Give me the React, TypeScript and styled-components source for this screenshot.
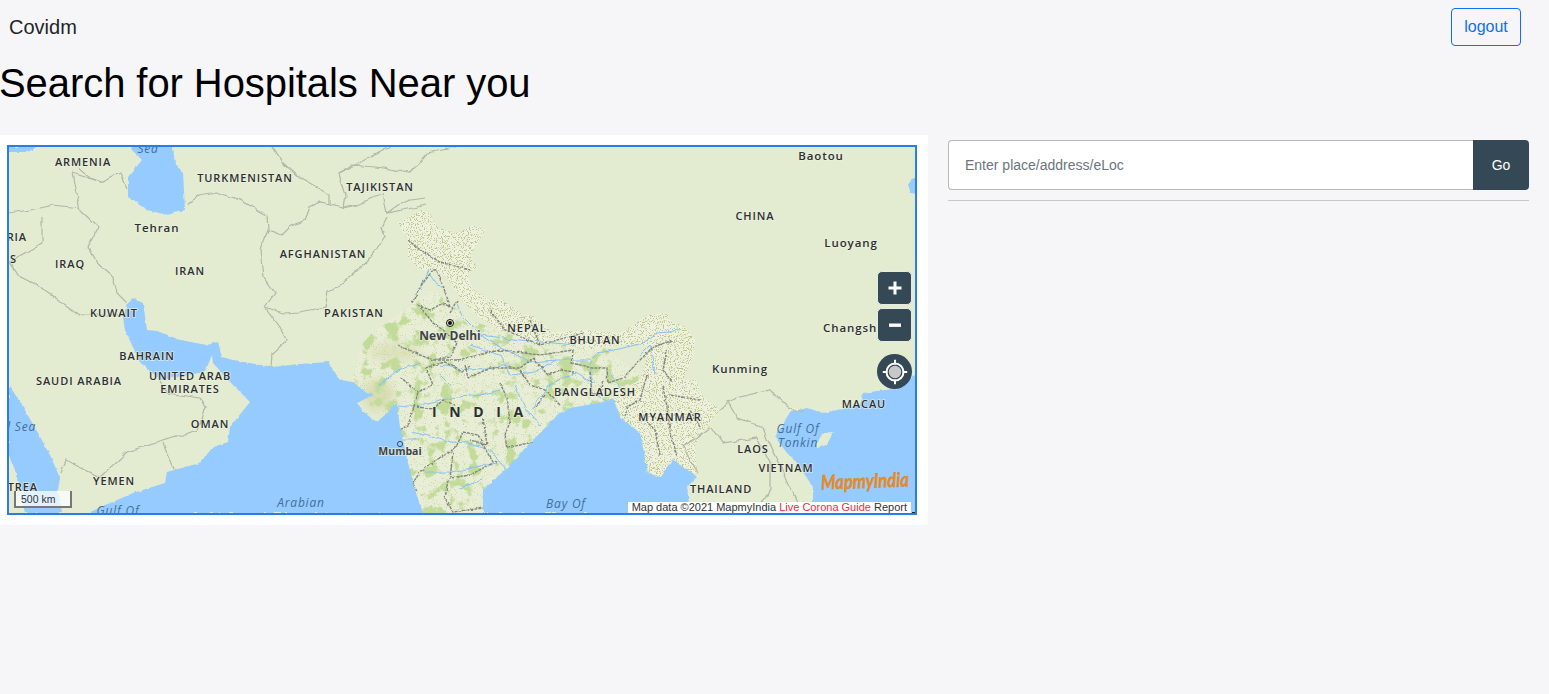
import React from 'react';
import styled, { createGlobalStyle } from 'styled-components';

const Global = createGlobalStyle`
  html, body { margin: 0; padding: 0; background: #f6f6f9; }
  body { font-family: "Liberation Sans", Arial, sans-serif; overflow: hidden; }
  * { box-sizing: border-box; }
`;
const Page = styled.div`width: 1549px; height: 694px; background: #f6f6f9; overflow: hidden;`;
const Navbar = styled.nav`
  height: 54px; padding: 8px 28px 8px 9px; display: flex; align-items: center; justify-content: space-between;
`;
const Brand = styled.a`font-size: 20px; color: #212529; line-height: 30px;`;
const LogoutButton = styled.button`
  height: 38px; width: 70px; padding: 0; font: 16px "Liberation Sans", Arial, sans-serif; color: #0d6efd;
  background: transparent; border: 1px solid #0d6efd; border-radius: 4px;
`;
const Title = styled.h1`
  margin: 5px 0 28px -1px; font-size: 40px; line-height: 48px; font-weight: 400; color: #000; letter-spacing: -0.07px;
`;
const Content = styled.main`display: flex; align-items: flex-start;`;
const MapCard = styled.section`width: 928px; height: 390px; padding: 10px 11px 10px 7px; background: #fff;`;
const MapFrame = styled.div`
  position: relative; width: 910px; height: 370px; border: 2px solid #2a7de8; overflow: hidden; background: #e3ebd0;
`;
const MapSvg = styled.svg`display: block; width: 906px; height: 366px;`;
const Controls = styled.div`
  position: absolute; top: 124px; right: 3px; display: flex; flex-direction: column; align-items: center; gap: 3px;
`;
const ZoomButton = styled.button`
  width: 35px; height: 34px; padding: 0; display: flex; align-items: center; justify-content: center;
  background: #344955; border: 1px solid #e6e9e4; border-radius: 5px;
`;
const LocateButton = styled.button`
  width: 35px; height: 35px; margin-top: 9px; padding: 0; display: flex; align-items: center; justify-content: center;
  background: #344955; border: 0; border-radius: 50%;
`;
const Attribution = styled.div`
  position: absolute; right: 4px; bottom: 0; height: 11px; padding: 0 4px; background: #fff;
  font-size: 11px; line-height: 11px; color: #333; white-space: nowrap;
`;
const CoronaLink = styled.span`color: #ee2b3e;`;
const CornerMark = styled.i`position: absolute; right: 0; bottom: 0; width: 3px; height: 1px; background: #222;`;
const ScaleBar = styled.div`
  position: absolute; left: 5px; bottom: 5px; width: 58px; height: 17px; padding-left: 5px;
  background: rgba(255,255,255,.72); border: 2px solid #777; border-top: 0;
  font-size: 10.5px; line-height: 16px; color: #333;
`;
const SearchColumn = styled.aside`width: 581px; margin-left: 20px; padding-top: 5px;`;
const SearchGroup = styled.form`display: flex; height: 50px; margin: 0;`;
const SearchInput = styled.input`
  flex: 1; min-width: 0; padding: 0 16px; font: 14px "Liberation Sans", Arial, sans-serif; color: #333;
  background: #fff; border: 1px solid #b8b8b8; border-right: 0; border-radius: 4px 0 0 4px; outline: 0;
  &::placeholder { color: #6c757d; opacity: 1; }
`;
const GoButton = styled.button`
  width: 56px; font: 14px "Liberation Sans", Arial, sans-serif; color: #fff; background: #344955;
  border: 0; border-radius: 0 4px 4px 0;
`;
const Divider = styled.hr`margin: 10px 0 0; height: 1px; border: 0; background: #c8c8c8;`;

const MapLabel = styled.text<{ $kind?: string }>`
  font-family: "Open Sans", "Liberation Sans", sans-serif;
  font-size: ${p => p.$kind === 'country' ? 11 : p.$kind === 'city' ? 11.5 : p.$kind === 'capital' ? 12 : p.$kind === 'water' ? 12 : p.$kind === 'india' ? 14 : 11.5}px;
  font-weight: ${p => p.$kind === 'capital' || p.$kind === 'india' ? 700 : p.$kind === 'water' ? 500 : 600};
  font-style: ${p => p.$kind === 'water' ? 'italic' : 'normal'};
  letter-spacing: ${p => p.$kind === 'india' ? 12.6 : p.$kind === 'capital' ? 0 : p.$kind === 'water' ? 0.8 : 0.9}px;
  fill: ${p => p.$kind === 'water' ? '#41709a' : p.$kind === 'capital' ? '#3e4347' : '#2d3033'};
  paint-order: stroke;
  stroke: ${p => p.$kind === 'water' ? 'none' : 'rgba(238,242,224,.75)'};
  stroke-width: 1.5px;
`;
const LogoText = styled.text`
  font-family: "Lato", sans-serif; font-size: 20px; font-weight: 700; font-style: italic;
  fill: #ef8f26; stroke: #cf7412; stroke-width: .35px;
`;

const SEA = [
  '125,330 123,318 127,303 133,298 143,303 147,330 157,331 180,340 207,345 218,342 222,357 233,360 272,367 300,364 328,362 340,380 353,382 365,392 373,395 357,403 366,414 377,422 388,412 397,403 400,427 408,463 415,490 423,513 88,513 133,493 165,483 167,472 200,463 213,447 228,442 230,427 250,402 233,385 213,363 212,355 205,372 160,380 140,362',
  '483,513 483,490 507,468 530,443 560,413 570,408 603,402 613,398 620,417 640,433 648,473 660,477 673,460 683,467 697,477 687,487 690,513',
  '917,373 900,388 863,393 860,405 823,413 807,408 790,412 775,437 787,453 797,463 813,487 813,513 917,513',
  '9,385 22,405 38,433 50,455 60,478 58,490 62,513 25,513 15,470 9,455',
  '130,147 173,147 175,163 183,173 185,210 167,215 147,210 128,197 128,177 142,160 132,150',
  '9,147 37,147 28,152 12,152 9,152',
  '908,185 912,179 917,176 917,194 911,193',
];
const BORDERS = [
  '187,205 200,195 217,192 240,200 267,215 268,230 282,235 290,227 305,220 310,207 320,202 330,204 343,207 357,204',
  '273,147 283,163 300,178 330,195 330,204',
  '343,208 345,195 338,173 360,163 375,155 390,147',
  '338,173 352,165 385,168 410,173 427,153 458,147',
  '343,208 357,205 383,193 387,213 427,205',
  '268,230 260,250 263,277 275,293 265,307',
  '387,217 382,227 385,237 377,250 367,262 343,283 328,293 325,307 300,312 283,313 265,307',
  '265,307 280,327 287,340 273,353 272,367',
  '73,173 80,210 98,227 88,247 97,263 113,277 117,293 127,303',
  '9,213 30,210 53,205 80,208',
  '42,217 42,243 9,262 17,275 40,287 80,315 117,315',
  '73,173 100,182 120,172 128,190',
  '78,168 90,178 100,182',
  '160,380 167,393 200,398 205,407 198,430 127,452 100,477 65,460 60,473',
  '163,443 175,470',
  '720,410 728,402 737,398 770,390 787,407 803,412',
  '727,400 737,418 763,427 767,440 787,480 797,503',
  '712,427 723,443 757,438 770,463 770,490 756,513',
  '697,473 683,447 710,427',
  '387,213 398,205 410,200 425,198',
];
const STATES = [
  '400,377 418,392 413,410 408,425 400,430',
  '417,407 433,409 443,400 455,405',
  '463,432 478,435 487,452 493,462 497,463',
  '463,432 457,445 450,452 433,462 420,472 413,483 417,492',
  '453,452 450,478 470,475 493,463',
  '448,480 445,498 453,512 483,508',
  '427,370 433,385 418,392',
  '465,365 468,378 490,368 520,368 533,358',
  '500,383 507,398 510,422 505,435 507,448 533,442',
  '483,418 487,445 470,440',
  '450,307 447,297 437,270 433,270 420,287 412,303',
  '417,305 430,310 443,303 450,307',
  '420,307 433,323 443,330 457,343 450,357 433,360',
  '457,300 450,313',
  '573,350 572,363 592,368 607,368 608,383 623,378 638,362 653,347 673,340',
  '667,350 663,370 672,382',
  '647,375 640,400 627,407 625,417',
  '663,387 667,407 670,430 677,457',
  '408,240 420,250 440,262 470,270',
  '397,345 420,355 433,360 458,360 500,350 540,355 573,350',
  '490,310 505,330 540,345',
  '530,320 540,345 557,340 584,333',
  '670,395 700,400',
  '425,368 445,362 462,372 470,366',
  '533,358 548,375 560,370 574,372',
  '520,370 530,385 545,390 560,405',
  '590,372 592,395 600,392 603,380',
  '545,395 535,408',
  '700,427 690,410',
  '640,415 655,430 660,455',
];
const RIVERS = [
  '457,303 463,317 483,337 497,345 530,362 557,360 590,360 592,393 607,400',
  '593,358 597,353 623,348 643,343 657,333 670,332 680,328',
  '397,405 417,407 450,398 480,395 500,390',
  '413,432 450,442 470,443 487,448 507,470',
  '423,472 450,472 497,463',
  '460,488 482,480',
  '430,275 437,285 445,287',
  '420,290 428,270',
  '470,345 500,355 510,375 535,372 555,360',
  '480,335 520,340 575,345',
  '440,365 470,370 510,365',
  '400,440 420,440',
  '380,385 395,372 420,362',
  '560,380 575,372 595,385',
  '640,355 650,345 655,375',
  '530,410 550,385 575,372',
  '515,385 525,408 540,425',
  '440,375 450,385',
  '610,372 622,392',
];
const SPECKLE = [
  '397,223 422,210 430,213 438,228 457,233 473,225 485,230 478,243 470,255 477,268 467,273 472,288 490,300 503,300 523,315 532,315 550,330 557,334 540,345 500,330 480,318 462,300 450,282 437,270 420,270 408,257 408,240',
  '540,335 557,332 583,330 620,333 630,327 647,315 667,313 672,323 683,325 695,340 693,357 683,380 697,380 703,397 720,410 708,425 695,445 697,473 685,487 672,460 660,477 648,473 640,433 622,417 612,395 640,380 650,345 620,345 585,350',
];
const INDIA = '363,343 373,332 412,303 433,290 470,320 540,345 600,345 640,375 625,420 560,420 500,480 470,513 420,513 395,430 350,385';
const LABELS: { t: string; x: number; y: number; k?: string; a?: 'start' | 'middle' | 'end' }[] = [
  { t: 'ARMENIA', x: 83, y: 166, k: 'country' }, { t: 'Sea', x: 148, y: 153, k: 'water' },
  { t: 'TURKMENISTAN', x: 245, y: 182, k: 'country' }, { t: 'TAJIKISTAN', x: 380, y: 191, k: 'country' },
  { t: 'KYRGYZSTAN', x: 420, y: 147, k: 'country' }, { t: 'Tehran', x: 157, y: 232, k: 'city' },
  { t: 'SYRIA', x: 27, y: 241, k: 'country', a: 'end' }, { t: 'JS', x: 17, y: 263, k: 'country', a: 'end' },
  { t: 'IRAQ', x: 70, y: 268, k: 'country' }, { t: 'IRAN', x: 190, y: 275, k: 'country' },
  { t: 'AFGHANISTAN', x: 323, y: 258, k: 'country' }, { t: 'PAKISTAN', x: 354, y: 317, k: 'country' },
  { t: 'KUWAIT', x: 114, y: 317, k: 'country' }, { t: 'BAHRAIN', x: 147, y: 360, k: 'country' },
  { t: 'SAUDI ARABIA', x: 79, y: 385, k: 'country' }, { t: 'UNITED ARAB', x: 190, y: 380, k: 'country' },
  { t: 'EMIRATES', x: 190, y: 393, k: 'country' }, { t: 'OMAN', x: 210, y: 428, k: 'country' },
  { t: 'Red Sea', x: 36, y: 431, k: 'water', a: 'end' }, { t: 'YEMEN', x: 114, y: 485, k: 'country' },
  { t: 'ERITREA', x: 38, y: 491, k: 'country', a: 'end' }, { t: 'Arabian', x: 301, y: 507, k: 'water' },
  { t: 'Gulf Of', x: 118, y: 515, k: 'water' }, { t: 'New Delhi', x: 450, y: 340, k: 'capital' },
  { t: 'NEPAL', x: 527, y: 332, k: 'country' }, { t: 'BHUTAN', x: 595, y: 344, k: 'country' },
  { t: 'BANGLADESH', x: 595, y: 396, k: 'country' }, { t: 'MYANMAR', x: 670, y: 421, k: 'country' },
  { t: 'Kunming', x: 740, y: 373, k: 'city' }, { t: 'CHINA', x: 755, y: 220, k: 'country' },
  { t: 'Baotou', x: 821, y: 160, k: 'city' }, { t: 'Luoyang', x: 851, y: 247, k: 'city' },
  { t: 'Changsha', x: 823, y: 332, k: 'city', a: 'start' }, { t: 'MACAU', x: 864, y: 408, k: 'country' },
  { t: 'Gulf Of', x: 798, y: 433, k: 'water' }, { t: 'Tonkin', x: 798, y: 447, k: 'water' },
  { t: 'LAOS', x: 753, y: 453, k: 'country' }, { t: 'VIETNAM', x: 786, y: 472, k: 'country' },
  { t: 'THAILAND', x: 721, y: 493, k: 'country' }, { t: 'Bay Of', x: 566, y: 508, k: 'water' },
];

export default function App() {
  return (
    <Page>
      <Global />
      <Navbar>
        <Brand>Covidm</Brand>
        <LogoutButton type="button">logout</LogoutButton>
      </Navbar>
      <Title>Search for Hospitals Near you</Title>
      <Content>
        <MapCard>
          <MapFrame>
            <MapSvg viewBox="9 147 906 366">
              <defs>
                <filter id="rough" x="-5%" y="-5%" width="110%" height="110%" colorInterpolationFilters="sRGB">
                  <feTurbulence type="fractalNoise" baseFrequency="0.2" numOctaves="2" seed="4" result="n" />
                  <feDisplacementMap in="SourceGraphic" in2="n" scale="3" xChannelSelector="R" yChannelSelector="G" />
                </filter>
                <filter id="line" x="-5%" y="-5%" width="110%" height="110%" colorInterpolationFilters="sRGB">
                  <feTurbulence type="fractalNoise" baseFrequency="0.09" numOctaves="2" seed="11" result="n" />
                  <feDisplacementMap in="SourceGraphic" in2="n" scale="5" xChannelSelector="R" yChannelSelector="G" />
                </filter>
                <filter id="speckle" x="-5%" y="-5%" width="110%" height="110%" colorInterpolationFilters="sRGB">
                  <feTurbulence type="fractalNoise" baseFrequency="0.85" numOctaves="2" seed="8" />
                  <feColorMatrix values="0 0 0 0 .74  0 0 0 0 .78  0 0 0 0 .53  0 0 0 10 -5.5" />
                  <feComposite in2="SourceAlpha" operator="in" result="dots" />
                  <feMerge><feMergeNode in="SourceGraphic" /><feMergeNode in="dots" /></feMerge>
                </filter>
                <filter id="patches" x="0" y="0" width="100%" height="100%" colorInterpolationFilters="sRGB">
                  <feTurbulence type="fractalNoise" baseFrequency="0.075" numOctaves="4" seed="21" />
                  <feColorMatrix values="0 0 0 0 .76  0 0 0 0 .86  0 0 0 0 .60  0 0 0 9 -4.9" />
                  <feComposite in2="SourceAlpha" operator="in" />
                </filter>
                <filter id="fine" x="0" y="0" width="100%" height="100%" colorInterpolationFilters="sRGB">
                  <feTurbulence type="fractalNoise" baseFrequency="0.9" numOctaves="1" seed="5" />
                  <feColorMatrix values="0 0 0 0 .78  0 0 0 0 .84  0 0 0 0 .62  0 0 0 9 -5.6" />
                  <feComposite in2="SourceAlpha" operator="in" />
                </filter>
                <filter id="soft" x="-40%" y="-40%" width="180%" height="180%"><feGaussianBlur stdDeviation="5" /></filter>
              </defs>
              <rect x="9" y="147" width="906" height="366" fill="#e3ebd0" />
              <polygon points={INDIA} fill="#e8edd6" filter="url(#rough)" />
              <ellipse cx="378" cy="395" rx="16" ry="16" fill="#d8ddb2" filter="url(#soft)" />
              <ellipse cx="395" cy="352" rx="26" ry="10" fill="#dde2bd" filter="url(#soft)" />
              <polygon points={INDIA} fill="#000" filter="url(#patches)" />
              <polygon points={INDIA} fill="#000" filter="url(#fine)" />
              <g filter="url(#speckle)">
                {SPECKLE.map((p, i) => <polygon key={i} points={p} fill="#eef1df" />)}
              </g>
              <g fill="none" stroke="#85c0f7" strokeWidth="1" filter="url(#line)">
                {RIVERS.map((p, i) => <polyline key={i} points={p} />)}
              </g>
              <g fill="#96cbff" filter="url(#rough)">
                {SEA.map((p, i) => <polygon key={i} points={p} />)}
              </g>
              <polygon points="817,443 823,433 833,432 827,445 817,448" fill="#e3ebd0" filter="url(#rough)" />
              <g fill="none" stroke="#b0b8a6" strokeWidth="1.2" filter="url(#line)">
                {BORDERS.map((p, i) => <polyline key={i} points={p} />)}
              </g>
              <g fill="none" stroke="#83857f" strokeWidth="1.4" strokeDasharray="3 1" filter="url(#rough)">
                {STATES.map((p, i) => <polyline key={i} points={p} />)}
              </g>
              <circle cx="450" cy="323" r="3.5" fill="#e8ecd8" stroke="#111" strokeWidth="1" />
              <circle cx="450" cy="323" r="2" fill="#111" />
              <circle cx="400" cy="444" r="2.6" fill="none" stroke="#3a4f63" strokeWidth="1" />
              {LABELS.map(l => (
                <MapLabel key={l.t + l.x} x={l.x} y={l.y} $kind={l.k} textAnchor={l.a ?? 'middle'}>{l.t}</MapLabel>
              ))}
              <MapLabel x="400" y="455" $kind="capital" textAnchor="middle" style={{ fontSize: 10.5 }}>Mumbai</MapLabel>
              <MapLabel x="432" y="417" $kind="india">INDIA</MapLabel>
              <LogoText x="821" y="488" textLength="88" lengthAdjust="spacingAndGlyphs" transform="rotate(-2 865 482)">MapmyIndia</LogoText>
            </MapSvg>
            <ScaleBar>500 km</ScaleBar>
            <Controls>
              <ZoomButton type="button" aria-label="zoom in">
                <svg width="16" height="16" viewBox="0 0 16 16"><path d="M6.5 1.5h3v5h5v3h-5v5h-3v-5h-5v-3h5z" fill="#fff" /></svg>
              </ZoomButton>
              <ZoomButton type="button" aria-label="zoom out">
                <svg width="14" height="14" viewBox="0 0 14 14"><rect x="1" y="5.5" width="12" height="3.4" fill="#fff" /></svg>
              </ZoomButton>
              <LocateButton type="button" aria-label="my location">
                <svg width="26" height="26" viewBox="0 0 26 26">
                  <circle cx="13" cy="13" r="8.5" fill="none" stroke="#fff" strokeWidth="2" />
                  <circle cx="13" cy="13" r="6.2" fill="#c8c8c8" />
                  <path d="M13 .8v4.6M13 20.6v4.6M.8 13h4.6M20.6 13h4.6" stroke="#fff" strokeWidth="2" />
                </svg>
              </LocateButton>
            </Controls>
            <Attribution>Map data ©2021 MapmyIndia <CoronaLink>Live Corona Guide</CoronaLink> Report</Attribution>
            <CornerMark />
          </MapFrame>
        </MapCard>
        <SearchColumn>
          <SearchGroup>
            <SearchInput placeholder="Enter place/address/eLoc" />
            <GoButton type="button">Go</GoButton>
          </SearchGroup>
          <Divider />
        </SearchColumn>
      </Content>
    </Page>
  );
}
